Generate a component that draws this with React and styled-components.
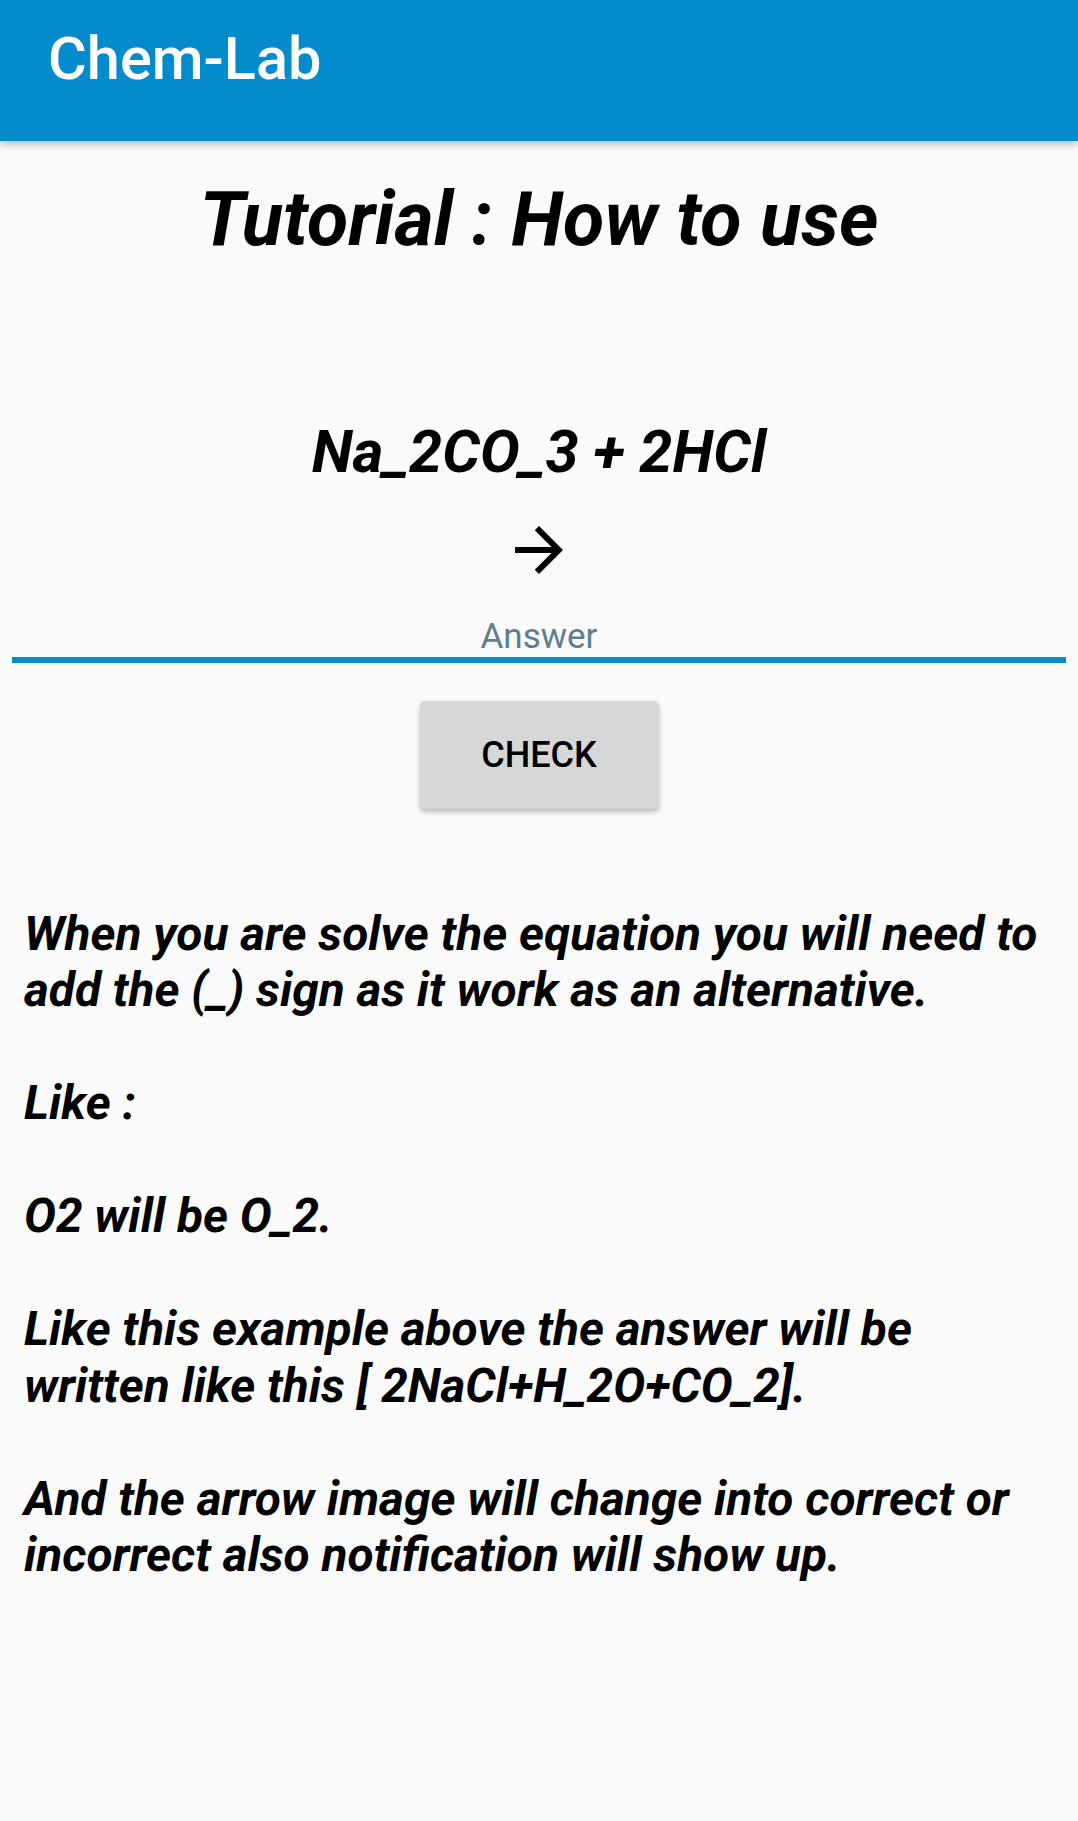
import styled, { createGlobalStyle } from 'styled-components'

const GlobalStyle = createGlobalStyle`
    * {
        box-sizing: border-box;
    }
    body {
        margin: 0;
        background: #FAFAFA;
        font-family: Roboto, "Noto Sans", sans-serif;
    }
`

const Pagina = styled.div`
    width: 1078px;
    min-height: 1821px;
    background: #FAFAFA;
    display: flex;
    flex-direction: column;
`

const Toolbar = styled.header`
    height: 141px;
    padding: 25px 0 0 48px;
    background: #038BCC;
    box-shadow: 0 3px 8px rgba(0, 0, 0, 0.28);
    position: relative;
    z-index: 1;
`

const TituloApp = styled.h1`
    margin: 0;
    color: #FFF;
    font-family: Roboto, sans-serif;
    font-weight: 500;
    font-size: 59.5px;
    line-height: 69.7px;
`

const Conteudo = styled.main`
    display: flex;
    flex-direction: column;
    align-items: center;
`

const Titulo = styled.h2`
    margin: 34px 0 0;
    font-size: 75.5px;
    font-style: italic;
    font-weight: 700;
    line-height: 88.5px;
    color: #000;
`

const Equacao = styled.p`
    margin: 154.6px 0 0;
    font-size: 59.5px;
    font-style: italic;
    font-weight: 700;
    line-height: 69.7px;
    color: #000;
`

const Seta = styled.svg`
    margin-top: 26px;
    width: 72px;
    height: 72px;
    display: block;
`

const Campo = styled.div`
    align-self: stretch;
    margin: 31px 12px 0;
    border-bottom: 6px solid #058CCB;
    text-align: center;
`

const Dica = styled.span`
    display: block;
    font-size: 35px;
    line-height: 40px;
    color: #607D8B;
`

const Botao = styled.button`
    margin-top: 38px;
    width: 239px;
    height: 108px;
    border: none;
    border-radius: 5px;
    background: #D6D7D7;
    box-shadow: 0 3px 5px rgba(0, 0, 0, 0.25);
    font-family: Roboto, sans-serif;
    font-weight: 500;
    font-size: 36px;
    color: #000;
    padding: 0;
`

const Texto = styled.section`
    align-self: stretch;
    padding: 0 18px 0 24px;
    margin-top: 97px;
`

const Paragrafo = styled.p`
    margin: 0 0 56.5px;
    font-size: 47.8px;
    font-style: italic;
    font-weight: 700;
    line-height: 56.5px;
    color: #000;
`

const paragrafos = [
    'When you are solve the equation you will need to add the (_) sign as it work as an alternative.',
    'Like :',
    'O2 will be O_2.',
    'Like this example above the answer will be written like this [ 2NaCl+H_2O+CO_2].',
    'And the arrow image will change into correct or incorrect also notification will show up.',
]

function App() {
    return (
        <Pagina>
            <GlobalStyle />
            <Toolbar>
                <TituloApp>Chem-Lab</TituloApp>
            </Toolbar>
            <Conteudo>
                <Titulo>Tutorial : How to use</Titulo>
                <Equacao>Na_2CO_3 + 2HCl</Equacao>
                <Seta viewBox="0 0 24 24">
                    <path fill="#000" d="M12 4l-1.41 1.41L16.17 11H4v2h12.17l-5.58 5.59L12 20l8-8z" />
                </Seta>
                <Campo>
                    <Dica>Answer</Dica>
                </Campo>
                <Botao>CHECK</Botao>
                <Texto>
                    { paragrafos.map( (texto, index) => (
                        <Paragrafo key={index}>{texto}</Paragrafo>
                    )) }
                </Texto>
            </Conteudo>
        </Pagina>
    )
}

export default App
